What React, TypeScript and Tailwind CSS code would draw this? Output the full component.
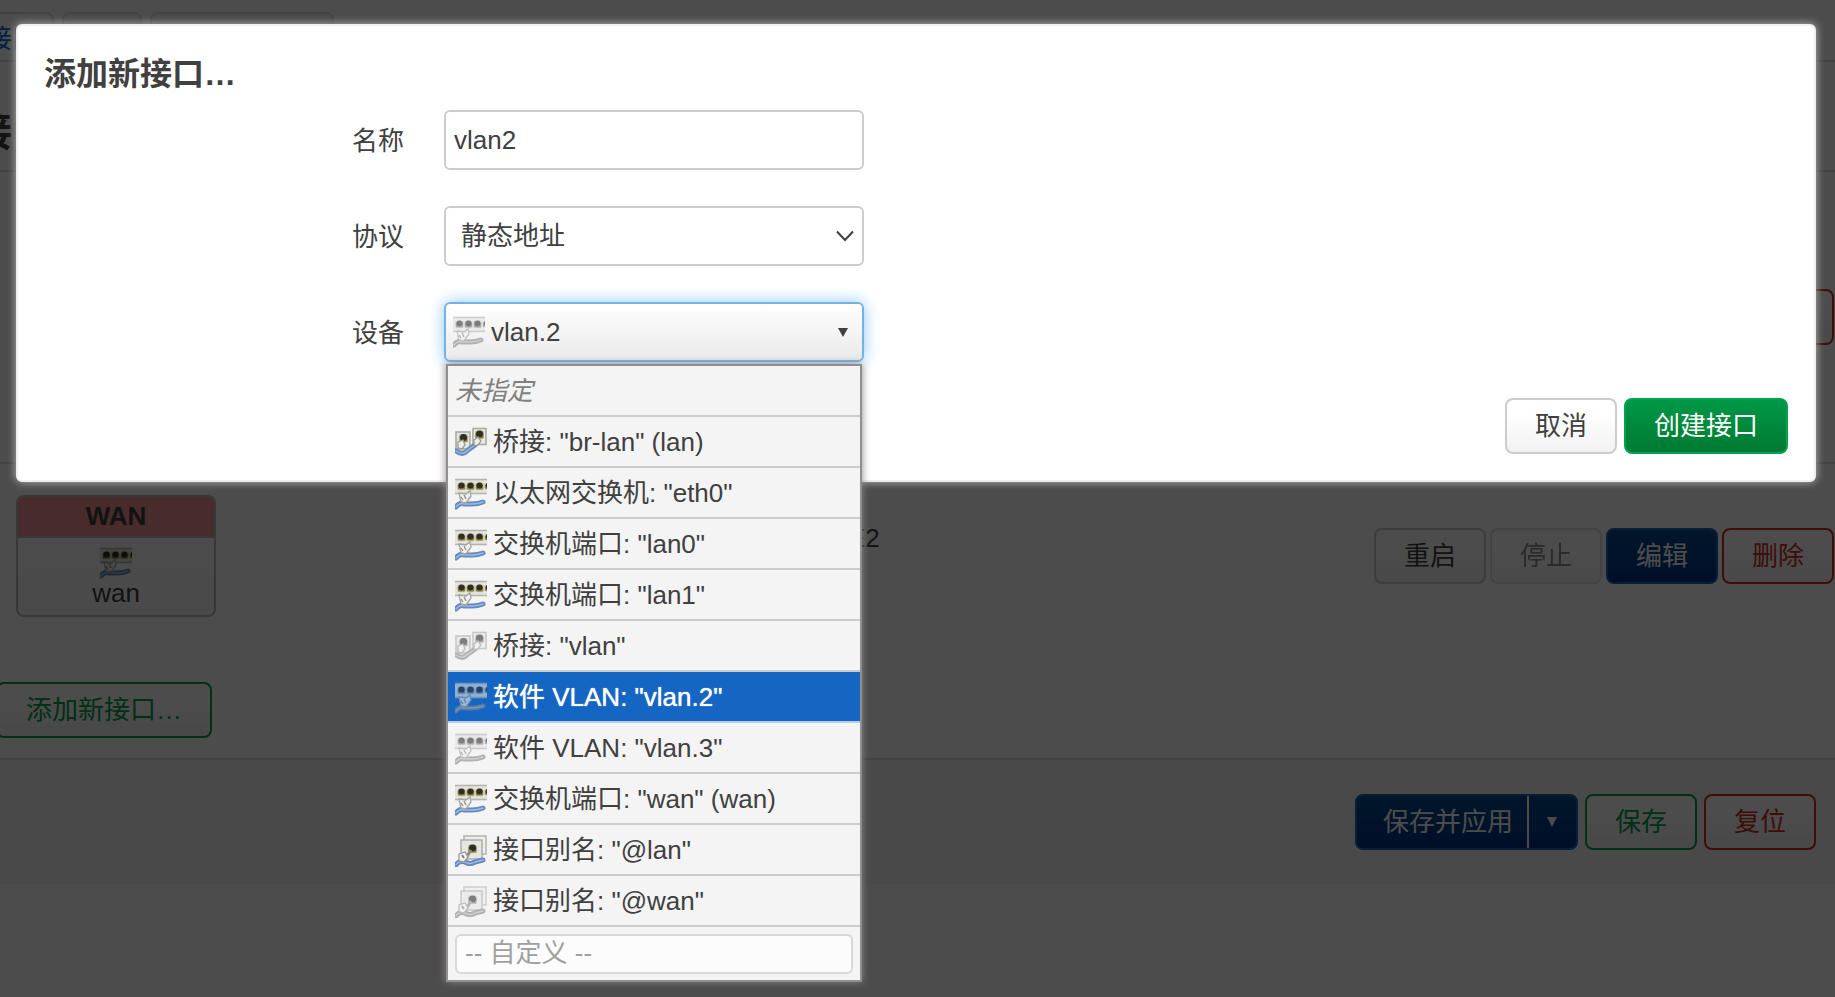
import React, { useId, useState } from 'react';
import clsx from 'clsx';

type IconKind = 'bridge' | 'switch' | 'alias';

function Cable({ d }: { d: string }) {
  return (
    <>
      <path d={d} fill="none" stroke="#6389c0" strokeWidth="5" strokeLinecap="round" strokeLinejoin="round" />
      <path d={d} fill="none" stroke="#9dbbe2" strokeWidth="1.4" strokeLinecap="round" />
    </>
  );
}

function Port({ x, y, r }: { x: number; y: number; r: number }) {
  return (
    <g>
      <rect x={x - r - 0.6} y={y - r} width={r * 2 + 1.2} height={r * 2 + 0.6} rx="2" fill="#c4c2a0" />
      <rect x={x - r} y={y - r + 2} width={r * 2} height={r * 2 - 2} rx="1" fill="#8d8640" />
      <ellipse cx={x} cy={y - 0.6} rx={r - 0.5} ry={r - 0.6} fill="#2f2e26" />
    </g>
  );
}

function DeviceIcon({ kind, off = false }: { kind: IconKind; off?: boolean }) {
  const blurId = useId();
  return (
    <svg
      viewBox="0 0 32 32"
      aria-hidden="true"
      className={clsx('size-8 shrink-0', off && 'opacity-60 grayscale')}
    >
      <filter id={blurId} filterUnits="userSpaceOnUse" x="0" y="0" width="32" height="32">
        <feGaussianBlur stdDeviation="0.75" />
      </filter>
      <g filter={`url(#${blurId})`}>
        {kind === 'switch' && (
          <>
            <rect x="-2" y="1.5" width="36" height="14" fill="#e4e4de" stroke="#b4b4b0" strokeWidth="1.6" />
            <Port x={6.5} y={8} r={3.6} />
            <Port x={15.5} y={8} r={3.6} />
            <Port x={24.5} y={8} r={3.6} />
            <Port x={33} y={8} r={3} />
            <Cable d="M1 29Q5 24 9 26L17 26Q23 26 28 24" />
            <path d="M4 15l7 1 4-3 1 5-5 7-5-1z" fill="#f0f0ec" stroke="#a3a39f" strokeWidth="1.3" />
            <path d="M9 17l2 4M6 19l2 3" stroke="#8b8b87" strokeWidth="1.3" />
          </>
        )}
        {kind === 'bridge' && (
          <>
            <rect x="1" y="5" width="14" height="17" fill="#e6e6e0" stroke="#aaaaa6" strokeWidth="1.6" />
            <rect x="18" y="1.5" width="13" height="16" fill="#ecece7" stroke="#aaaaa6" strokeWidth="1.6" />
            <Port x={8.500} y={11} r={4} />
            <Port x={24.5} y={7.5} r={4} />
            <Cable d="M1 24Q8 29 13 23L20 18" />
            <path d="M3 15l5-2 2 5-3 4-4-1zM19 13l4-3 3 4-3 4-4 1z" fill="#efefea" stroke="#999995" strokeWidth="1.3" />
          </>
        )}
        {kind === 'alias' && (
          <>
            <rect x="9" y="1" width="22" height="18" fill="#ededea" stroke="#b4b4b0" strokeWidth="1.5" />
            <rect x="6" y="5" width="21" height="19" fill="#e6e6e1" stroke="#adadaa" strokeWidth="1.5" />
            <Port x={17.5} y={13.5} r={4} />
            <Cable d="M1 30Q4 25 10 27Q15 30 20 27L28 25" />
            <path d="M16 15l-5 8" stroke="#8b8b80" strokeWidth="3" />
            <path d="M4 19l6-2 3 5-4 5-5-1z" fill="#f2f2ef" stroke="#999995" strokeWidth="1.3" />
            <path d="M7 20l2 3" stroke="#6f7c90" strokeWidth="1.8" />
          </>
        )}
      </g>
    </svg>
  );
}

const tone = {
  neutral: 'border-[#cccccc] text-[#404040] bg-linear-to-b from-white via-white via-25% to-[#f2f2f2]',
  muted: 'border-[#cccccc] text-[#404040] bg-linear-to-b from-white via-white via-25% to-[#f2f2f2] opacity-60',
  green: 'border-[#00a651] text-[#00a04c] bg-linear-to-b from-white via-white via-25% to-[#f2f2f2]',
  red: 'border-[#d92d20] text-[#d02c22] bg-linear-to-b from-white via-white via-25% to-[#f2f2f2]',
  blue: 'border-[#1565c3] text-white bg-linear-to-b from-[#064c8e] to-[#013084]',
  create: 'border-[#00a450] text-white bg-linear-to-b from-[#009848] to-[#007a33]',
};

function Button({ kind, children }: { kind: keyof typeof tone; children: React.ReactNode }) {
  return (
    <button
      type="button"
      disabled={kind === 'muted'}
      className={clsx('h-14 rounded-lg border-2 px-7 whitespace-nowrap', tone[kind])}
    >
      {children}
    </button>
  );
}

function Background() {
  return (
    <div className="min-h-screen overflow-hidden bg-white pt-3">
      <nav className="-ml-7 flex h-[50px] gap-2 border-b-2 border-[#dddddd]">
        <a href="#interfaces" className="w-[82px] rounded-t-lg border-2 border-b-0 border-[#dddddd] pl-3 leading-[50px] text-[#0069d6]">
          接口
        </a>
        <a href="#devices" aria-label="设备" className="w-20 rounded-t-lg border-2 border-b-0 border-[#dddddd] bg-[#f4f4f4]" />
        <a href="#globals" aria-label="选项" className="w-[184px] rounded-t-lg border-2 border-b-0 border-[#dddddd] bg-[#f4f4f4]" />
      </nav>
      <h2 className="-ml-7 flex h-[110px] items-center border-b-2 border-[#dddddd] pt-8 text-[40px] font-bold">接口</h2>

      <div className="flex h-[292px] items-center justify-end border-b-2 border-[#dddddd] pr-px">
        <Button kind="red">删除</Button>
      </div>

      <div className="flex items-center pt-[31px] pr-px pl-4">
        <section className="w-[200px] overflow-hidden rounded-lg border-2 border-[#bbbbbb] bg-linear-to-b from-white to-[#f6f6f6] text-center">
          <h3 className="border-b-2 border-[#bbbbbb] bg-[#f09090] leading-[39px] font-bold">WAN</h3>
          <div className="flex h-[77px] flex-col items-center pt-[9px]">
            <DeviceIcon kind="switch" />
            <span className="leading-7">wan</span>
          </div>
        </section>
        <p className="ml-[632px] h-[76px] flex-1 leading-10">E2</p>
        <div className="flex gap-1">
          <Button kind="neutral">重启</Button>
          <Button kind="muted">停止</Button>
          <Button kind="blue">编辑</Button>
          <Button kind="red">删除</Button>
        </div>
      </div>

      <div className="-ml-1 pt-[65px] pb-5">
        <Button kind="green">添加新接口…</Button>
      </div>

      <footer className="flex justify-end gap-[7px] border-t-2 border-[#dddddd] bg-[#f5f5f5] py-[34px] pr-[19px]">
        <div className="flex h-14 overflow-hidden rounded-lg border-2 border-[#1565c3] bg-linear-to-b from-[#064c8e] to-[#013084] text-white">
          <button type="button" className="border-r-2 border-white pr-3.5 pl-[26px]">保存并应用</button>
          <button type="button" aria-label="应用" className="flex w-[47px] items-center justify-center">
            <svg viewBox="0 0 10 10" className="size-2.5" fill="currentColor" aria-hidden="true">
              <path d="M0 0h10L5 10z" />
            </svg>
          </button>
        </div>
        <Button kind="green">保存</Button>
        <Button kind="red">复位</Button>
      </footer>
    </div>
  );
}

const devices: { icon: IconKind; label: string; off?: boolean }[] = [
  { icon: 'bridge', label: '桥接: "br-lan" (lan)' },
  { icon: 'switch', label: '以太网交换机: "eth0"' },
  { icon: 'switch', label: '交换机端口: "lan0"' },
  { icon: 'switch', label: '交换机端口: "lan1"' },
  { icon: 'bridge', label: '桥接: "vlan"', off: true },
  { icon: 'switch', label: '软件 VLAN: "vlan.2"', off: true },
  { icon: 'switch', label: '软件 VLAN: "vlan.3"', off: true },
  { icon: 'switch', label: '交换机端口: "wan" (wan)' },
  { icon: 'alias', label: '接口别名: "@lan"' },
  { icon: 'alias', label: '接口别名: "@wan"', off: true },
];

function DeviceList() {
  const [selected, setSelected] = useState(5);
  return (
    <ul
      role="listbox"
      aria-labelledby="device-label"
      className="absolute inset-x-0.5 top-full z-10 mt-0.5 border-2 border-[#918f8d] bg-[#f4f4f4] shadow-[0_0_8px_#8c8886]"
    >
      <li role="option" aria-selected={false} className="flex h-[51px] items-center border-b-2 border-[#cccccc] px-[7px] pt-0.5 text-[#808080] italic">
        未指定
      </li>
      {devices.map((device, i) => (
        <li
          key={device.label}
          role="option"
          aria-selected={i === selected}
          onClick={() => setSelected(i)}
          className={clsx(
            'flex h-[51px] items-center gap-1.5 border-b-2 px-[7px] pt-0.5 whitespace-nowrap',
            i === selected
              ? 'border-[#b9cfe8] bg-[#1565c3] text-white [text-shadow:0_0_1px_#ffffff]'
              : 'border-[#cccccc]',
          )}
        >
          <DeviceIcon kind={device.icon} off={device.off} />
          {device.label}
        </li>
      ))}
      <li className="flex h-[53px] items-center px-[7px]">
        <input
          aria-label="自定义"
          placeholder="-- 自定义 --"
          className="h-10 w-full rounded-md border-2 border-[#d8d8d8] bg-[#fcfcfc] px-2 placeholder:text-[#a0a0a0]"
        />
      </li>
    </ul>
  );
}

const fieldBox = 'h-[60px] w-full rounded-md border-2';

function Field({ id, label, children }: { id: string; label: string; children: React.ReactNode }) {
  return (
    <div className="flex items-center gap-10 py-[18px]">
      <label id={`${id}-label`} htmlFor={id} className="w-[360px] pt-0.5 text-right">
        {label}
      </label>
      <div className="relative w-[420px]">{children}</div>
    </div>
  );
}

function Dialog() {
  return (
    <div className="absolute inset-0 bg-black/70 pt-6 pr-[19px] pl-4">
      <div
        role="dialog"
        aria-labelledby="dialog-title"
        className="rounded-md border-2 border-[#efefef] bg-white p-[26px] shadow-[0_0_8px_#bbbbbb]"
      >
        <h4 id="dialog-title" className="pt-1 text-[32px] leading-9 font-bold">
          添加新接口…
        </h4>
        <Field id="name" label="名称">
          <input id="name" defaultValue="vlan2" className={clsx(fieldBox, 'border-[#cccccc] bg-white px-2')} />
        </Field>
        <Field id="protocol" label="协议">
          <select id="protocol" className={clsx(fieldBox, 'appearance-none border-[#cccccc] bg-white px-[15px]')}>
            <option>静态地址</option>
          </select>
          <svg viewBox="0 0 18 12" className="pointer-events-none absolute top-6 right-2.5 h-3 w-[18px]" fill="none" stroke="#404040" strokeWidth="2" aria-hidden="true">
            <path d="M1 1.500l8 8.500 8-8.500" />
          </svg>
        </Field>
        <Field id="device" label="设备">
          <button
            id="device"
            type="button"
            aria-haspopup="listbox"
            aria-expanded="true"
            className={clsx(
              fieldBox,
              'flex items-center gap-1.5 border-[#74b2e6] bg-linear-to-b from-white to-[#eaeaea] pr-3.5 pl-[7px] shadow-[0_0_16px_#8fc8f6]',
            )}
          >
            <DeviceIcon kind="switch" off />
            <span className="flex-1 text-left">vlan.2</span>
            <svg viewBox="0 0 10 9" className="h-[9px] w-2.5" fill="currentColor" aria-hidden="true">
              <path d="M0 0h10L5 9z" />
            </svg>
          </button>
          <DeviceList />
        </Field>
        <div className="flex justify-end gap-[7px] pt-[18px]">
          <Button kind="neutral">取消</Button>
          <Button kind="create">创建接口</Button>
        </div>
      </div>
    </div>
  );
}

export default function App() {
  return (
    <div className="relative font-['Liberation_Sans','Noto_Sans_CJK_SC',sans-serif] text-[26px] text-[#404040]">
      <Background />
      <Dialog />
    </div>
  );
}
